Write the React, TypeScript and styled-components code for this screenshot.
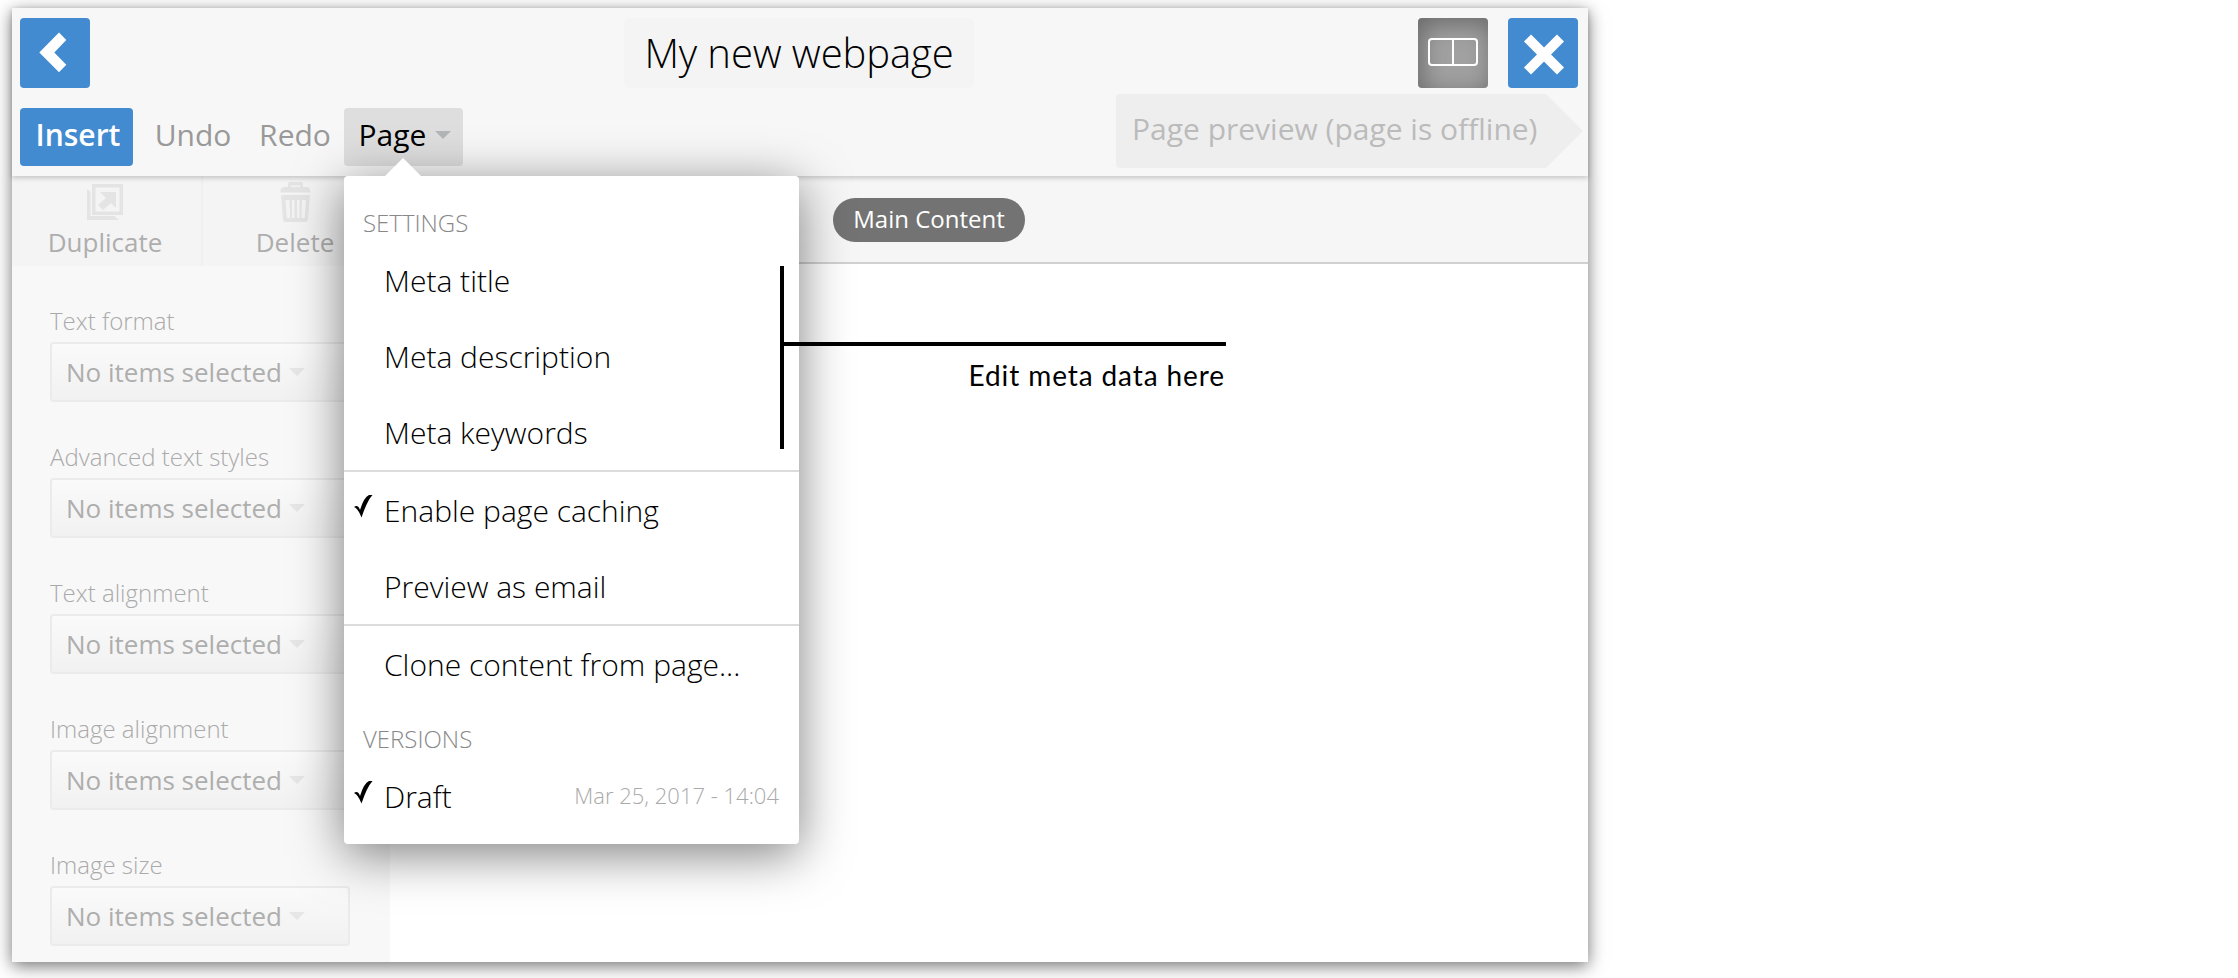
import React from 'react';
import styled, { createGlobalStyle } from 'styled-components';

const GlobalStyle = createGlobalStyle`
  *, *::before, *::after { box-sizing: border-box; }
  body {
    margin: 0;
    background: #fff;
    color: #000;
    font-family: 'Open Sans', sans-serif;
  }
  button { font: inherit; border: 0; padding: 0; margin: 0; }
`;

const Page = styled.div`
  height: 978px;
  padding: 8px 12px;
  overflow: hidden;
`;

const Editor = styled.div`
  position: relative;
  display: flex;
  flex-direction: column;
  width: 1576px;
  height: 954px;
  background: #fff;
  box-shadow: 0 4px 16px rgba(0, 0, 0, 0.55);
`;

const Header = styled.header`
  position: relative;
  flex: none;
  height: 168px;
  background: #f7f7f7;
  box-shadow: 0 2px 5px rgba(0, 0, 0, 0.2);
`;

const TitleBar = styled.div`
  display: grid;
  grid-template-columns: 1fr auto 1fr;
  align-items: start;
  height: 86px;
  padding: 10px 10px 0 8px;
`;

const Actions = styled.div<{ $end?: boolean }>`
  display: flex;
  gap: 20px;
  justify-content: ${(p) => (p.$end ? 'flex-end' : 'flex-start')};
`;

const SquareButton = styled.button<{ $pressed?: boolean }>`
  display: flex;
  width: 70px;
  height: 70px;
  border-radius: 4px;
  background: ${(p) => (p.$pressed ? '#a1a1a1' : '#428bd1')};
  box-shadow: ${(p) => (p.$pressed ? 'inset 4px 6px 24px rgba(0, 0, 0, 0.35)' : 'none')};
`;

const Title = styled.h1`
  width: 350px;
  height: 70px;
  margin: 0;
  border-radius: 6px;
  background: #f4f4f4;
  font-size: 40px;
  font-weight: 300;
  letter-spacing: -0.1px;
  line-height: 70px;
  text-align: center;
  white-space: nowrap;
`;

const Toolbar = styled.div`
  display: flex;
  align-items: flex-start;
  height: 82px;
  padding-left: 8px;
`;

const ToolButton = styled.button<{ $kind?: 'primary' | 'open'; $width: number }>`
  display: flex;
  align-items: center;
  justify-content: center;
  gap: 9px;
  width: ${(p) => p.$width}px;
  height: 58px;
  margin: 14px 0 0 ${(p) => (p.$kind === 'open' ? 7 : 0)}px;
  padding: 0 0 4px ${(p) => (p.$kind ? 3 : 0)}px;
  border-radius: 4px;
  font-size: 30px;
  line-height: 54px;
  font-weight: ${(p) => (p.$kind === 'primary' ? 600 : 400)};
  color: ${(p) => (p.$kind === 'primary' ? '#fff' : p.$kind === 'open' ? '#000' : '#999')};
  background: ${(p) =>
    p.$kind === 'primary' ? '#428bd1' : p.$kind === 'open' ? '#dedede' : 'transparent'};
`;

const Caret = styled.span<{ $color: string }>`
  width: 0;
  height: 0;
  border: 8px solid transparent;
  border-top-color: ${(p) => p.$color};
  border-bottom: 0;
`;

const Preview = styled.div`
  display: flex;
  width: 467px;
  height: 74px;
  margin: 0 5px 0 auto;
  padding-left: 16px;
  border-radius: 4px 0 0 4px;
  background: #eee;
  clip-path: polygon(0 0, 430px 0, 467px 37px, 430px 74px, 0 74px);
  color: #bbb;
  font-size: 30px;
  line-height: 70px;
  white-space: nowrap;
`;

const Body = styled.div`
  display: flex;
  flex: 1;
  min-height: 0;
`;

const Sidebar = styled.aside`
  flex: none;
  width: 378px;
  background: #f8f8f8;
`;

const SideTools = styled.div`
  display: flex;
  height: 90px;
  background: #f4f4f4;
`;

const SideTool = styled.div`
  display: flex;
  flex-direction: column;
  align-items: center;
  width: 189px;
  height: 90px;
  padding-right: 3px;
  color: #aeaeae;
  font-size: 26px;
  line-height: 36px;

  & + & {
    border-left: 2px solid #efefef;
  }
  svg {
    height: 48px;
  }
`;

const Fields = styled.div`
  display: flex;
  flex-direction: column;
  gap: 40px;
  padding: 40px 40px 0 38px;
`;

const Field = styled.label`
  display: block;
  height: 96px;
  color: #aaa;
  font-size: 24px;
  font-weight: 300;
  line-height: 30px;
`;

const Select = styled.span`
  display: flex;
  align-items: center;
  gap: 7px;
  height: 60px;
  margin-top: 6px;
  padding: 0 0 1px 14px;
  border: 2px solid #ebebeb;
  border-radius: 4px;
  background: linear-gradient(#fafafa, #f1f1f1);
  color: #aeaeae;
  font-size: 26px;
  font-weight: 400;
`;

const Canvas = styled.main`
  flex: 1;
  background: #fff;
`;

const RegionBar = styled.div`
  height: 88px;
  padding: 22px 0 0 443px;
  border-bottom: 2px solid #d1d1d1;
  background: #f6f6f6;
`;

const Pill = styled.div`
  width: 192px;
  height: 44px;
  border-radius: 22px;
  background: #737373;
  color: #fff;
  font-size: 24px;
  line-height: 42px;
  text-align: center;
`;

const Menu = styled.div`
  position: absolute;
  z-index: 2;
  top: 168px;
  left: 332px;
  width: 455px;
  height: 668px;
  padding: 10px 0;
  border-radius: 4px;
  background: #fff;
  box-shadow: 0 10px 50px rgba(0, 0, 0, 0.5);

  &::before {
    content: '';
    position: absolute;
    top: -18px;
    left: 41px;
    border: 18px solid transparent;
    border-top: 0;
    border-bottom-color: #fff;
  }
`;

const MenuHeading = styled.div`
  height: 56px;
  padding: 18px 0 0 19px;
  color: #888;
  font-size: 24px;
  font-weight: 300;
  line-height: 37px;
`;

const MenuItem = styled.div<{ $divided?: boolean }>`
  display: flex;
  align-items: center;
  height: ${(p) => (p.$divided ? 78 : 76)}px;
  padding-right: 20px;
  border-top: ${(p) => (p.$divided ? '2px solid #dcdcdc' : '0')};
  font-size: 30px;
  font-weight: 300;
  line-height: 76px;
  white-space: nowrap;
`;

const MarkSlot = styled.span`
  display: flex;
  width: 40px;
  padding: 0 0 7px 10px;
`;

const ItemLabel = styled.span`
  padding-top: 2px;
  line-height: 74px;
`;

const Stamp = styled.span`
  margin-left: auto;
  color: #aaa;
  font-size: 22px;
  line-height: 74px;
  padding-bottom: 2px;
`;

const Bracket = styled.div`
  position: absolute;
  z-index: 3;
  top: 258px;
  left: 768px;
  width: 4px;
  height: 183px;
  background: #000;
`;

const Callout = styled.div`
  position: absolute;
  z-index: 3;
  top: 334px;
  left: 772px;
  width: 442px;
  padding: 12px 1px 0 0;
  border-top: 4px solid #000;
  font-family: Lato, sans-serif;
  font-size: 28px;
  line-height: 35px;
  letter-spacing: 0.9px;
  text-align: right;
  white-space: nowrap;
`;

const BackIcon = () => (
  <svg width="70" height="70" viewBox="0 0 70 70">
    <path d="M39 14.5 19.3 34.5 39 54.3 46.3 46.8 34.3 34.5 46.3 22Z" fill="#fff" />
  </svg>
);

const CloseIcon = () => (
  <svg width="70" height="70" viewBox="0 0 70 70">
    <path d="M19.5 20 52.5 53M52.5 20 19.5 53" stroke="#fff" strokeWidth="10" />
  </svg>
);

const ColumnsIcon = () => (
  <svg width="70" height="70" viewBox="0 0 70 70" fill="none" stroke="#fff" strokeWidth="2">
    <rect x="11" y="21" width="48" height="26" rx="3" />
    <path d="M35 21v26" />
  </svg>
);

const DuplicateIcon = () => (
  <svg width="36" height="48" viewBox="0 0 36 48" fill="#e4e4e4">
    <path fillRule="evenodd" d="M5 8h31v31H5ZM8.500 11.500v24h24v-24Z" />
    <path d="M0 13l3.500 3v24h24l4 4H0Z" />
    <path d="M13 16h16v16l-5-5-8 7-5-5 8-7Z" />
  </svg>
);

const TrashIcon = () => (
  <svg width="31" height="48" viewBox="0 0 31 48" fill="#e4e4e4">
    <path d="M8 11V8q0-2 2-2h11q2 0 2 2v3h4q3 0 3.500 5.500H.300Q.500 11 4 11ZM11 11h9V9.500h-9Z" fillRule="evenodd" />
    <path
      d="M1 19h29l-2 24q-.3 3-3 3H6q-2.700 0-3-3ZM5.500 24l1.300 18h3.400L9.500 24ZM12 24v18h2.500V24ZM17 24v18h2.500V24ZM22 24l-.7 18h3.400l1.300-18Z"
      fillRule="evenodd"
    />
  </svg>
);

const CheckIcon = () => (
  <svg width="19" height="23" viewBox="0 0 19 23">
    <path d="M0 12q4-3 6 3Q10 2 15 0h3.500Q13 6 7.500 22.500Q4 13.500 0 12Z" />
  </svg>
);

type Entry = { label: string; checked?: boolean; divided?: boolean; stamp?: string };

const settings: Entry[] = [
  { label: 'Meta title' },
  { label: 'Meta description' },
  { label: 'Meta keywords' },
  { label: 'Enable page caching', checked: true, divided: true },
  { label: 'Preview as email' },
  { label: 'Clone content from page...', divided: true },
];

const versions: Entry[] = [{ label: 'Draft', checked: true, stamp: 'Mar 25, 2017 - 14:04' }];

const fields = ['Text format', 'Advanced text styles', 'Text alignment', 'Image alignment', 'Image size'];

const Entries = ({ items }: { items: Entry[] }) => (
  <>
    {items.map((item) => (
      <MenuItem key={item.label} $divided={item.divided}>
        <MarkSlot>{item.checked && <CheckIcon />}</MarkSlot>
        <ItemLabel>{item.label}</ItemLabel>
        {item.stamp && <Stamp>{item.stamp}</Stamp>}
      </MenuItem>
    ))}
  </>
);

export default function App() {
  return (
    <Page>
      <GlobalStyle />
      <Editor>
        <Header>
          <TitleBar>
            <Actions>
              <SquareButton aria-label="Back"><BackIcon /></SquareButton>
            </Actions>
            <Title>My new webpage</Title>
            <Actions $end>
              <SquareButton $pressed aria-label="Columns"><ColumnsIcon /></SquareButton>
              <SquareButton aria-label="Close"><CloseIcon /></SquareButton>
            </Actions>
          </TitleBar>
          <Toolbar>
            <ToolButton $kind="primary" $width={113}>Insert</ToolButton>
            <ToolButton $width={120}>Undo</ToolButton>
            <ToolButton $width={84}>Redo</ToolButton>
            <ToolButton $kind="open" $width={119}>
              Page <Caret $color="#b3b6b6" />
            </ToolButton>
            <Preview>Page preview (page is offline)</Preview>
          </Toolbar>
        </Header>
        <Body>
          <Sidebar>
            <SideTools>
              <SideTool><DuplicateIcon />Duplicate</SideTool>
              <SideTool><TrashIcon />Delete</SideTool>
            </SideTools>
            <Fields>
              {fields.map((name) => (
                <Field key={name}>
                  {name}
                  <Select>No items selected <Caret $color="#e6e6e6" /></Select>
                </Field>
              ))}
            </Fields>
          </Sidebar>
          <Canvas>
            <RegionBar><Pill>Main Content</Pill></RegionBar>
          </Canvas>
        </Body>
        <Menu>
          <MenuHeading>SETTINGS</MenuHeading>
          <Entries items={settings} />
          <MenuHeading>VERSIONS</MenuHeading>
          <Entries items={versions} />
        </Menu>
        <Bracket />
        <Callout>Edit meta data here</Callout>
      </Editor>
    </Page>
  );
}
